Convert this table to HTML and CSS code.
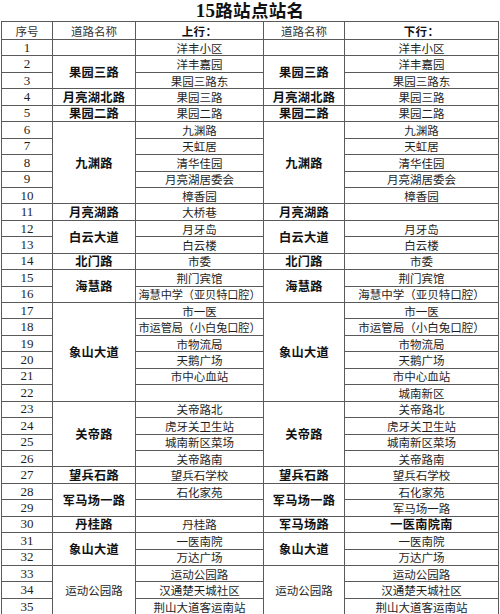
FILE: index.html
```html
<!DOCTYPE html>
<html lang="zh">
<head>
<meta charset="utf-8">
<title>15路站点站名</title>
<link rel="stylesheet" href="styles.css">
</head>
<body>
<div class="page">
  <div class="title"><span class="num">15</span>路站点站名</div>
  <table class="stops">
    <colgroup>
      <col class="c-no"><col class="c-road"><col class="c-up"><col class="c-road2"><col class="c-down">
    </colgroup>
    <tr class="head">
      <td>序号</td><td>道路名称</td><td class="b">上行：</td><td>道路名称</td><td class="b">下行：</td>
    </tr>
    <tr><td class="n">1</td><td></td><td>洋丰小区</td><td></td><td>洋丰小区</td></tr>
    <tr><td class="n">2</td><td class="b" rowspan="2">果园三路</td><td>洋丰嘉园</td><td class="b" rowspan="2">果园三路</td><td>洋丰嘉园</td></tr>
    <tr><td class="n">3</td><td>果园三路东</td><td>果园三路东</td></tr>
    <tr><td class="n">4</td><td class="b">月亮湖北路</td><td>果园三路</td><td class="b">月亮湖北路</td><td>果园三路</td></tr>
    <tr><td class="n">5</td><td class="b">果园二路</td><td>果园二路</td><td class="b">果园二路</td><td>果园二路</td></tr>
    <tr><td class="n">6</td><td class="b" rowspan="5">九渊路</td><td>九渊路</td><td class="b" rowspan="5">九渊路</td><td>九渊路</td></tr>
    <tr><td class="n">7</td><td>天虹居</td><td>天虹居</td></tr>
    <tr><td class="n">8</td><td>清华佳园</td><td>清华佳园</td></tr>
    <tr><td class="n">9</td><td>月亮湖居委会</td><td>月亮湖居委会</td></tr>
    <tr><td class="n">10</td><td>樟香园</td><td>樟香园</td></tr>
    <tr><td class="n">11</td><td class="b">月亮湖路</td><td>大桥巷</td><td class="b">月亮湖路</td><td></td></tr>
    <tr><td class="n">12</td><td class="b" rowspan="2">白云大道</td><td>月牙岛</td><td class="b" rowspan="2">白云大道</td><td>月牙岛</td></tr>
    <tr><td class="n">13</td><td>白云楼</td><td>白云楼</td></tr>
    <tr><td class="n">14</td><td class="b">北门路</td><td>市委</td><td class="b">北门路</td><td>市委</td></tr>
    <tr><td class="n">15</td><td class="b" rowspan="2">海慧路</td><td>荆门宾馆</td><td class="b" rowspan="2">海慧路</td><td>荆门宾馆</td></tr>
    <tr><td class="n">16</td><td class="tight">海慧中学（亚贝特口腔）</td><td>海慧中学（亚贝特口腔）</td></tr>
    <tr><td class="n">17</td><td class="b" rowspan="6">象山大道</td><td>市一医</td><td class="b" rowspan="6">象山大道</td><td>市一医</td></tr>
    <tr><td class="n">18</td><td class="tight">市运管局（小白兔口腔）</td><td>市运管局（小白兔口腔）</td></tr>
    <tr><td class="n">19</td><td>市物流局</td><td>市物流局</td></tr>
    <tr><td class="n">20</td><td>天鹅广场</td><td>天鹅广场</td></tr>
    <tr><td class="n">21</td><td>市中心血站</td><td>市中心血站</td></tr>
    <tr><td class="n">22</td><td></td><td>城南新区</td></tr>
    <tr><td class="n">23</td><td class="b" rowspan="4">关帝路</td><td>关帝路北</td><td class="b" rowspan="4">关帝路</td><td>关帝路北</td></tr>
    <tr><td class="n">24</td><td>虎牙关卫生站</td><td>虎牙关卫生站</td></tr>
    <tr><td class="n">25</td><td>城南新区菜场</td><td>城南新区菜场</td></tr>
    <tr><td class="n">26</td><td>关帝路南</td><td>关帝路南</td></tr>
    <tr><td class="n">27</td><td class="b">望兵石路</td><td>望兵石学校</td><td class="b">望兵石路</td><td>望兵石学校</td></tr>
    <tr><td class="n">28</td><td class="b" rowspan="2">军马场一路</td><td>石化家苑</td><td class="b" rowspan="2">军马场一路</td><td>石化家苑</td></tr>
    <tr><td class="n">29</td><td></td><td>军马场一路</td></tr>
    <tr><td class="n">30</td><td class="b">丹桂路</td><td>丹桂路</td><td class="b">军马场路</td><td class="b">一医南院南</td></tr>
    <tr><td class="n">31</td><td class="b" rowspan="2">象山大道</td><td>一医南院</td><td class="b" rowspan="2">象山大道</td><td>一医南院</td></tr>
    <tr><td class="n">32</td><td>万达广场</td><td>万达广场</td></tr>
    <tr><td class="n">33</td><td rowspan="3">运动公园路</td><td>运动公园路</td><td rowspan="3">运动公园路</td><td>运动公园路</td></tr>
    <tr><td class="n">34</td><td>汉通楚天城社区</td><td>汉通楚天城社区</td></tr>
    <tr><td class="n">35</td><td>荆山大道客运南站</td><td>荆山大道客运南站</td></tr>
  </table>
</div>
</body>
</html>
```

FILE: styles.css
```css
html, body {
  margin: 0;
  padding: 0;
  background: #ffffff;
}

body {
  font-family: "Noto Sans CJK SC", "Noto Sans", sans-serif;
  color: #1e1e1e;
}

.page {
  width: 500px;
  height: 614px;
  overflow: hidden;
}

.title {
  height: 21px;
  line-height: 22px;
  text-align: center;
  font-size: 17.5px;
  font-weight: bold;
  letter-spacing: 0.3px;
  color: #111;
  font-family: "Liberation Serif", "Noto Sans CJK SC", serif;
}

.title .num {
  font-family: "Liberation Serif", serif;
  font-size: 19px;
}

.stops {
  margin-left: 1px;
  width: 497px;
  border-collapse: collapse;
  table-layout: fixed;
}

.c-no { width: 51px; }
.c-road { width: 83px; }
.c-up { width: 128px; }
.c-road2 { width: 81px; }
.c-down { width: 154px; }

.stops td {
  border: 1px solid #5a5a5a;
  padding: 0;
  height: 15.45px;
  line-height: 14px;
  font-size: 11.5px;
  text-align: center;
  vertical-align: middle;
  white-space: nowrap;
  letter-spacing: 0;
}

.stops tr.head td {
  height: 17px;
  font-size: 11.5px;
  color: #333;
}

.stops tr.head td.b {
  font-weight: bold;
  color: #111;
}

.stops td.n {
  font-family: "Liberation Serif", serif;
  font-size: 13px;
}

.stops td.b {
  font-weight: bold;
  font-size: 12.2px;
  letter-spacing: 0.3px;
  color: #111;
}

.stops td.tight {
  font-size: 11.2px;
  letter-spacing: -0.1px;
}
```
